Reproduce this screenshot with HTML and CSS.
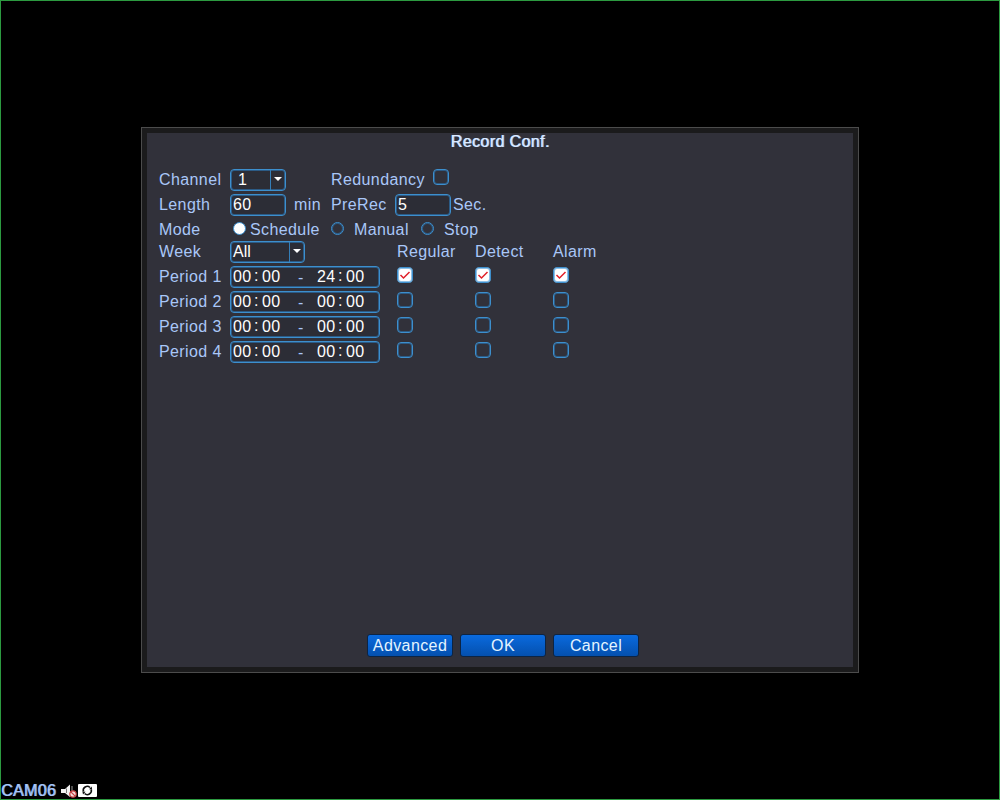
FILE: index.html
```html
<!DOCTYPE html>
<html lang="en">
<head>
    <meta charset="UTF-8">
    <title>Record Conf.</title>
    <link rel="stylesheet" href="styles.css">
</head>
<body>
    <div class="dialog">
        <h1 class="title">Record Conf.</h1>
        <div class="form">
            <div class="row">
                <span class="label">Channel</span>
                <div class="select channel"><span>1</span><i class="arrow"></i></div>
                <span class="label2">Redundancy</span>
                <span class="check"></span>
            </div>
            <div class="row">
                <span class="label">Length</span>
                <div class="input">60</div>
                <span class="unit">min</span>
                <span class="prerec">PreRec</span>
                <div class="input">5</div>
                <span class="sec">Sec.</span>
            </div>
            <div class="row mode">
                <span class="label">Mode</span>
                <span class="radio on"></span><span class="schedule">Schedule</span>
                <span class="radio"></span><span class="manual">Manual</span>
                <span class="radio"></span><span class="stop">Stop</span>
            </div>
            <div class="row">
                <span class="label">Week</span>
                <div class="select week"><span>All</span><i class="arrow"></i></div>
                <div class="types"><span>Regular</span><span>Detect</span><span>Alarm</span></div>
            </div>
            <div class="row">
                <span class="label">Period 1</span>
                <div class="time"><b>00</b><i>:</i><b>00</b><em>-</em><b>24</b><i>:</i><b>00</b></div>
                <div class="checks">
                    <span class="check on"><svg viewBox="0 0 12 12"><path d="M1.5 6L4.5 9L10.5 3"/></svg></span>
                    <span class="check on"><svg viewBox="0 0 12 12"><path d="M1.5 6L4.5 9L10.5 3"/></svg></span>
                    <span class="check on"><svg viewBox="0 0 12 12"><path d="M1.5 6L4.5 9L10.5 3"/></svg></span>
                </div>
            </div>
            <div class="row">
                <span class="label">Period 2</span>
                <div class="time"><b>00</b><i>:</i><b>00</b><em>-</em><b>00</b><i>:</i><b>00</b></div>
                <div class="checks"><span class="check"></span><span class="check"></span><span class="check"></span></div>
            </div>
            <div class="row">
                <span class="label">Period 3</span>
                <div class="time"><b>00</b><i>:</i><b>00</b><em>-</em><b>00</b><i>:</i><b>00</b></div>
                <div class="checks"><span class="check"></span><span class="check"></span><span class="check"></span></div>
            </div>
            <div class="row">
                <span class="label">Period 4</span>
                <div class="time"><b>00</b><i>:</i><b>00</b><em>-</em><b>00</b><i>:</i><b>00</b></div>
                <div class="checks"><span class="check"></span><span class="check"></span><span class="check"></span></div>
            </div>
        </div>
        <div class="buttons">
            <button>Advanced</button>
            <button>OK</button>
            <button>Cancel</button>
        </div>
    </div>
    <div class="status">
        <span class="cam">CAM06</span>
        <svg class="speaker" width="16" height="14" viewBox="0 0 16 14">
            <path d="M0 5H4L9 0.5V13L4 9H0Z" fill="#f2f2f2"/>
            <path d="M5.5 4.5V9" stroke="#777" fill="none"/>
            <path d="M11 2V7" stroke="#999" fill="none"/>
            <circle cx="12" cy="10" r="3.2" fill="#f5dddd" stroke="#c43c3c" stroke-width="1.2"/>
            <path d="M9.8 7.8L14.2 12.2" stroke="#c43c3c" stroke-width="1.2"/>
        </svg>
        <svg class="rec" width="19" height="13" viewBox="0 0 19 13">
            <rect width="19" height="13" rx="1" fill="#fff"/>
            <path d="M5.4 7.5A4 4 0 0 1 12 3.5M13.2 5.5A4 4 0 0 1 6.6 9.5" fill="none" stroke="#111" stroke-width="1.6"/>
            <path d="M11 5.3L14.2 5.6L13.6 2.4ZM7.6 7.7L4.4 7.4L5 10.6Z" fill="#111"/>
        </svg>
    </div>
</body>
</html>
```
FILE: styles.css
```css
* {
    box-sizing: border-box;
}
body {
    margin: 0;
    height: 800px;
    display: flex;
    flex-direction: column;
    align-items: center;
    justify-content: space-between;
    background: #000;
    border: 1px solid #2c9a40;
    font: 16px/20px "Liberation Sans", Arial, sans-serif;
    letter-spacing: 0.4px;
    color: #a9c7f8;
    overflow: hidden;
}
.dialog {
    width: 718px;
    height: 546px;
    margin-top: 126px;
    display: flex;
    flex-direction: column;
    background: #31313a;
    border: 1px solid #4c4c4c;
    box-shadow: inset 0 0 0 5px #1b1b1c;
    padding: 5px;
}
.title {
    margin: 0;
    height: 36px;
    line-height: 17px;
    font-size: 16px;
    font-weight: normal;
    text-align: center;
    color: #dcebff;
    text-shadow: 1px 0 0 #9fc0f5;
}
.form {
    flex: 1;
    padding-left: 12px;
}
.row {
    display: flex;
    align-items: flex-start;
    height: 25px;
    line-height: 21px;
    white-space: nowrap;
}
.label {
    width: 71px;
}
.select,
.input,
.time {
    display: flex;
    height: 22px;
    border: 1px solid #3d8fcd;
    border-radius: 4px;
    box-shadow: inset 0 0 0 1px #2c5b86;
    background: #2c2d36;
    color: #fff;
    line-height: 20px;
}
.select span {
    flex: 1;
    padding-left: 2px;
    letter-spacing: 0;
}
.channel {
    width: 56px;
}
.channel span {
    padding-left: 7px;
}
.week {
    width: 75px;
}
.arrow {
    width: 15px;
    height: 20px;
    border-left: 1px solid #347eb8;
    padding: 7px 0 0 3px;
}
.arrow::after {
    content: "";
    display: block;
    width: 8px;
    height: 4px;
    background: #fff;
    clip-path: polygon(0 0, 100% 0, 50% 100%);
}
.input {
    width: 56px;
    padding-left: 2px;
}
.label2 {
    width: 102px;
    margin-left: 45px;
}
.unit {
    width: 37px;
    margin-left: 8px;
}
.prerec {
    width: 64px;
}
.sec {
    margin-left: 2px;
}
.mode {
    height: 22px;
}
.radio {
    width: 13px;
    height: 13px;
    margin-top: 3px;
    border: 1px solid #3d8fcd;
    border-radius: 50%;
    box-shadow: inset 0 0 0 1px #2c5b86;
}
.radio.on {
    margin-left: 3px;
    background: #fff;
    box-shadow: none;
}
.schedule {
    width: 81px;
    margin-left: 4px;
}
.manual {
    width: 67px;
    margin-left: 10px;
}
.stop {
    margin-left: 10px;
}
.types {
    display: flex;
    margin-left: 92px;
}
.types span {
    width: 78px;
}
.time {
    width: 150px;
    padding-left: 2px;
}
.time b {
    width: 19px;
    font-weight: normal;
}
.time i {
    width: 10px;
    padding-left: 2px;
    font-style: normal;
    line-height: 18px;
}
.time em {
    width: 36px;
    padding-left: 17px;
    font-style: normal;
    line-height: 22px;
    color: #a9c7f8;
}
.checks {
    display: flex;
    gap: 62px;
    margin: 1px 0 0 17px;
}
.check {
    width: 16px;
    height: 16px;
    padding: 1px;
    border: 1px solid #3d8fcd;
    border-radius: 4px;
    box-shadow: inset 0 0 0 1px #2c5b86;
}
.check.on {
    background: #fff;
    box-shadow: inset 0 0 0 1px #8fc0e6;
}
.check svg {
    display: block;
    width: 12px;
    height: 12px;
    fill: none;
    stroke: #e0202a;
    stroke-width: 1.5;
}
.buttons {
    display: flex;
    justify-content: center;
    gap: 7px;
    padding: 0 0 10px 6px;
}
button {
    width: 86px;
    height: 23px;
    padding: 0;
    border: 1px solid #0c2444;
    border-radius: 3px;
    background: linear-gradient(#0a6ade, #0450ae);
    color: #e4f4ff;
    font: inherit;
    line-height: 20px;
    letter-spacing: 0.4px;
}
.status {
    display: flex;
    align-self: flex-start;
    align-items: center;
    height: 17px;
}
.cam {
    width: 60px;
    letter-spacing: 0.3px;
    text-shadow: 1px 0 0 #7fa4dc;
}
.rec {
    margin-left: 1px;
}
```
